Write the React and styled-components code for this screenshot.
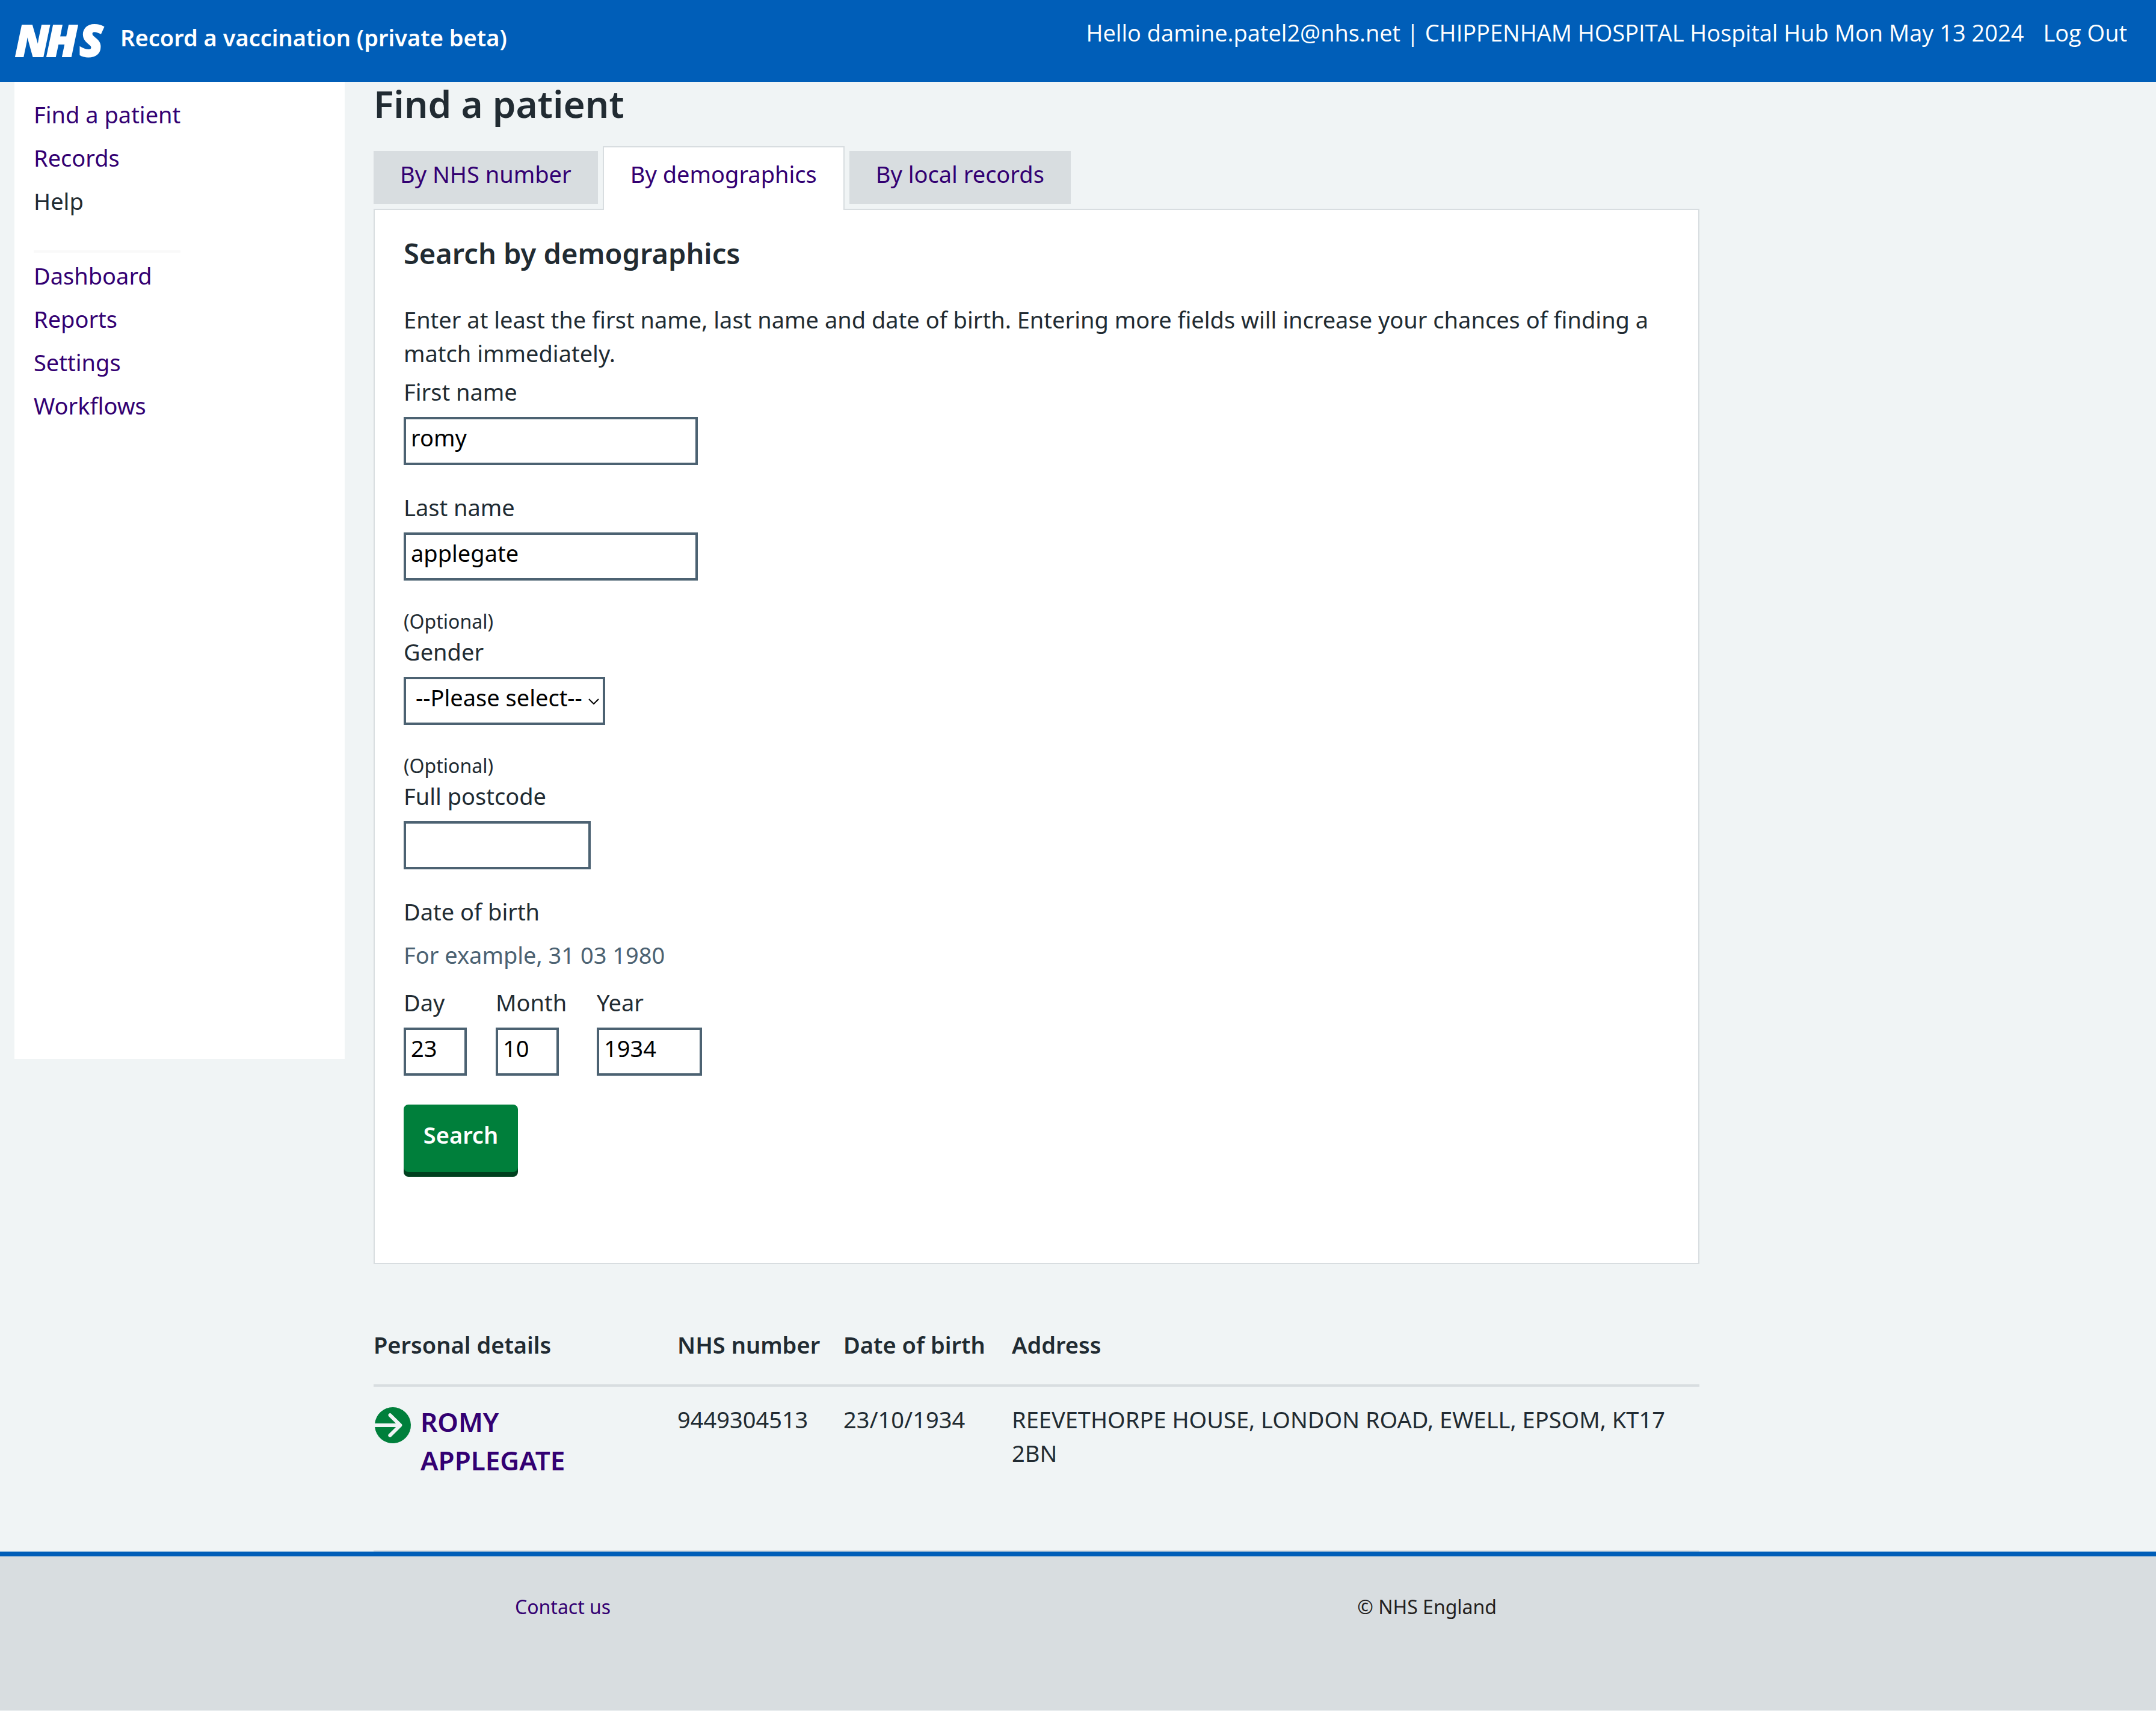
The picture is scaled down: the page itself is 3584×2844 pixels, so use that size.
import React, { useState } from "react";
import styled, { createGlobalStyle, css } from "styled-components";

const color = {
  blue: "#005eb8",
  text: "#212b32",
  visited: "#330072",
  page: "#f0f4f5",
  grey: "#d8dde0",
  secondary: "#4c6272",
  green: "#007f3b",
  greenDark: "#00401e",
  white: "#ffffff",
};

const GlobalStyle = createGlobalStyle`
  *, *::before, *::after { box-sizing: border-box; }
  html { background: ${color.page}; }
  body {
    margin: 0;
    color: ${color.text};
    font-family: "Noto Sans", "Open Sans", sans-serif;
    font-size: 38px;
    line-height: 56px;
  }
  input, select, button { font: inherit; }
`;

const Page = styled.div`
  display: flex;
  flex-direction: column;
`;

const Header = styled.header`
  display: flex;
  align-items: flex-start;
  justify-content: space-between;
  gap: 48px;
  height: 136px;
  padding: 26px 48px 0 24px;
  background: ${color.blue};
  color: ${color.white};
`;

const Brand = styled.a`
  display: flex;
  align-items: flex-start;
  gap: 24px;
  padding-top: 8px;
  color: inherit;
  font-weight: 600;
  text-decoration: none;
`;

const LogoMark = styled.svg`
  display: block;
  overflow: visible;
  width: 152px;
  height: 66px;
  fill: ${color.white};
  stroke: ${color.white};
  stroke-width: 2;
  font-family: "Open Sans", "Noto Sans", sans-serif;
  font-size: 72px;
  font-style: italic;
  font-weight: 800;
`;

const Account = styled.div`
  display: flex;
  gap: 32px;
  font-family: "Open Sans", "Noto Sans", sans-serif;
  white-space: nowrap;
`;

const AccountLink = styled.a`
  color: inherit;
  text-decoration: none;
`;

const Body = styled.div`
  display: flex;
  align-items: flex-start;
  gap: 48px;
  padding: 0 24px;
`;

const Sidebar = styled.nav`
  flex: 0 0 549px;
  min-height: 1624px;
  padding: 26px 32px;
  background: ${color.white};
`;

const NavList = styled.ul`
  display: flex;
  flex-direction: column;
  gap: 16px;
  width: max-content;
  margin: 0;
  padding: 0;
  list-style: none;
`;

const NavLink = styled.a`
  display: block;
  color: ${(p) => (p.$plain ? color.text : color.visited)};
  text-decoration: none;
`;

const NavGroups = styled.div`
  width: max-content;
`;

const Divider = styled.hr`
  height: 4px;
  margin: 54px 0 10px;
  border: 0;
  background: #f9f9f9;
`;

const Main = styled.main`
  flex: 0 1 2204px;
  min-width: 0;
`;

const PageTitle = styled.h1`
  margin: 0 0 35px;
  font-size: 62px;
  font-weight: 600;
  line-height: 72px;
`;

const TabList = styled.div`
  display: flex;
  align-items: flex-end;
  gap: 8px;
`;

const Tab = styled.button`
  margin: 0 0 8px;
  padding: 10px 44px 22px;
  border: 0;
  background: ${color.grey};
  color: ${color.visited};
  ${(p) =>
    p.$active &&
    css`
      position: relative;
      margin-bottom: -2px;
      padding: 16px 44px 32px;
      border: 2px solid ${color.grey};
      border-bottom: 0;
      background: ${color.white};
    `}
`;

const Panel = styled.section`
  padding: 40px 48px 151px;
  border: 2px solid ${color.grey};
  background: ${color.white};
`;

const PanelTitle = styled.h2`
  margin: 0 0 50px;
  font-size: 47px;
  font-weight: 600;
  line-height: 64px;
`;

const Intro = styled.p`
  margin: 0 0 14px;
`;

const Form = styled.form`
  display: flex;
  flex-direction: column;
  align-items: flex-start;
  gap: 48px;
`;

const Field = styled.div`
  display: flex;
  flex-direction: column;
  align-items: flex-start;
`;

const Optional = styled.span`
  display: block;
  margin-bottom: 8px;
  font-size: 32px;
  line-height: 40px;
`;

const Label = styled.label`
  margin-bottom: 20px;
  line-height: 44px;
`;

const controlBox = css`
  display: block;
  height: 80px;
  border: 4px solid ${color.secondary};
  border-radius: 0;
  background: ${color.white};
  color: #000;
  outline: 0;
`;

const Input = styled.input`
  ${controlBox}
  width: ${(p) => p.$width}px;
  padding: 0 8px 12px;
`;

const SelectWrap = styled.div`
  position: relative;
`;

const Select = styled.select`
  ${controlBox}
  width: 335px;
  padding: 0 16px 12px;
  appearance: none;
`;

const Chevron = styled.svg`
  position: absolute;
  top: 36px;
  right: 10px;
  width: 18px;
  height: 10px;
  fill: none;
  stroke: #000;
  stroke-width: 2;
  pointer-events: none;
`;

const Fieldset = styled.fieldset`
  min-width: 0;
  margin: 0;
  padding: 0;
  border: 0;
`;

const Legend = styled.legend`
  margin-bottom: 28px;
  padding: 0;
  line-height: 44px;
`;

const Hint = styled.div`
  margin-bottom: 35px;
  color: ${color.secondary};
  line-height: 44px;
`;

const DateRow = styled.div`
  display: grid;
  grid-template-columns: 105px 120px 175px;
  gap: 48px;
`;

const SearchButton = styled.button`
  width: 190px;
  padding: 22px 0 34px;
  border: 0;
  border-radius: 8px;
  background: ${color.green};
  box-shadow: 0 8px 0 ${color.greenDark};
  color: ${color.white};
  font-weight: 600;
`;

const Results = styled.table`
  width: 100%;
  margin-top: 106px;
  border-collapse: separate;
  border-spacing: 0;
  table-layout: fixed;
`;

const HeadCell = styled.th`
  width: ${(p) => (p.$width ? `${p.$width}px` : "auto")};
  padding: 0 0 38px;
  border-bottom: 4px solid ${color.grey};
  font-weight: 600;
  text-align: left;
  white-space: nowrap;
`;

const Cell = styled.td`
  padding: 26px 48px 118px 0;
  border-bottom: 2px solid ${color.grey};
  vertical-align: top;
`;

const PatientLink = styled.a`
  display: flex;
  align-items: flex-start;
  gap: 10px;
  margin-left: -4px;
  color: ${color.visited};
  font-size: 44px;
  font-weight: 600;
  line-height: 64px;
  text-decoration: none;
`;

const PatientName = styled.span`
  max-width: 280px;
`;

const ArrowIcon = styled.svg`
  flex: none;
  width: 72px;
  height: 72px;
  margin-top: 2px;
  fill: ${color.green};
`;

const Footer = styled.footer`
  display: flex;
  justify-content: space-between;
  min-height: 264px;
  padding: 60px 1096px 0 856px;
  border-top: 8px solid ${color.blue};
  background: ${color.grey};
  color: #231f20;
  font-size: 32px;
  line-height: 48px;
`;

const FooterLink = styled.a`
  color: ${color.visited};
  text-decoration: none;
`;

const primaryLinks = [
  { label: "Find a patient" },
  { label: "Records" },
  { label: "Help", plain: true },
];

const secondaryLinks = [
  { label: "Dashboard" },
  { label: "Reports" },
  { label: "Settings" },
  { label: "Workflows" },
];

const tabs = ["By NHS number", "By demographics", "By local records"];

const dateParts = [
  { id: "day", label: "Day", value: "23", width: 105 },
  { id: "month", label: "Month", value: "10", width: 105 },
  { id: "year", label: "Year", value: "1934", width: 175 },
];

function Nav({ links }) {
  return (
    <NavList>
      {links.map((link) => (
        <li key={link.label}>
          <NavLink href="#" $plain={link.plain}>
            {link.label}
          </NavLink>
        </li>
      ))}
    </NavList>
  );
}

function TextField({ id, label, value = "", width, optional }) {
  return (
    <Field>
      {optional && <Optional>(Optional)</Optional>}
      <Label htmlFor={id}>{label}</Label>
      <Input id={id} name={id} type="text" defaultValue={value} $width={width} />
    </Field>
  );
}

export default function App() {
  const [active, setActive] = useState("By demographics");

  return (
    <Page>
      <GlobalStyle />
      <Header>
        <Brand href="#">
          <LogoMark viewBox="0 0 152 66" role="img" aria-label="NHS">
            <text x="1 53 108" y="60">NHS</text>
          </LogoMark>
          <span>Record a vaccination (private beta)</span>
        </Brand>
        <Account>
          <span>
            Hello damine.patel2@nhs.net | CHIPPENHAM HOSPITAL Hospital Hub Mon May 13 2024
          </span>
          <AccountLink href="#">Log Out</AccountLink>
        </Account>
      </Header>

      <Body>
        <Sidebar>
          <NavGroups>
            <Nav links={primaryLinks} />
            <Divider />
            <Nav links={secondaryLinks} />
          </NavGroups>
        </Sidebar>

        <Main>
          <PageTitle>Find a patient</PageTitle>
          <TabList role="tablist">
            {tabs.map((tab) => (
              <Tab
                key={tab}
                type="button"
                role="tab"
                aria-selected={tab === active}
                $active={tab === active}
                onClick={() => setActive(tab)}
              >
                {tab}
              </Tab>
            ))}
          </TabList>

          <Panel>
            <PanelTitle>Search by demographics</PanelTitle>
            <Intro>
              Enter at least the first name, last name and date of birth. Entering more fields
              will increase your chances of finding a match immediately.
            </Intro>
            <Form onSubmit={(e) => e.preventDefault()}>
              <TextField id="first-name" label="First name" value="romy" width={489} />
              <TextField id="last-name" label="Last name" value="applegate" width={489} />
              <Field>
                <Optional>(Optional)</Optional>
                <Label htmlFor="gender">Gender</Label>
                <SelectWrap>
                  <Select id="gender" name="gender" defaultValue="">
                    <option value="">--Please select--</option>
                    <option value="female">Female</option>
                    <option value="male">Male</option>
                  </Select>
                  <Chevron viewBox="0 0 18 10" aria-hidden="true">
                    <path d="M1 1l8 8 8-8" />
                  </Chevron>
                </SelectWrap>
              </Field>
              <TextField id="postcode" label="Full postcode" width={311} optional />
              <Fieldset>
                <Legend>Date of birth</Legend>
                <Hint>For example, 31 03 1980</Hint>
                <DateRow>
                  {dateParts.map((part) => (
                    <TextField key={part.id} {...part} />
                  ))}
                </DateRow>
              </Fieldset>
              <SearchButton type="submit">Search</SearchButton>
            </Form>
          </Panel>

          <Results>
            <thead>
              <tr>
                <HeadCell scope="col" $width={505}>Personal details</HeadCell>
                <HeadCell scope="col" $width={276}>NHS number</HeadCell>
                <HeadCell scope="col" $width={280}>Date of birth</HeadCell>
                <HeadCell scope="col">Address</HeadCell>
              </tr>
            </thead>
            <tbody>
              <tr>
                <Cell>
                  <PatientLink href="#">
                    <ArrowIcon viewBox="0 0 24 24" aria-hidden="true">
                      <path d="M12 2a10 10 0 0 0-9.95 9h11.64L9.74 7.05a1 1 0 0 1 1.41-1.41l5.66 5.65a1 1 0 0 1 0 1.42l-5.66 5.65a1 1 0 0 1-1.41 0 1 1 0 0 1 0-1.41L13.69 13H2.05A10 10 0 1 0 12 2z" />
                    </ArrowIcon>
                    <PatientName>ROMY APPLEGATE</PatientName>
                  </PatientLink>
                </Cell>
                <Cell>9449304513</Cell>
                <Cell>23/10/1934</Cell>
                <Cell>REEVETHORPE HOUSE, LONDON ROAD, EWELL, EPSOM, KT17 2BN</Cell>
              </tr>
            </tbody>
          </Results>
        </Main>
      </Body>

      <Footer>
        <FooterLink href="#">Contact us</FooterLink>
        <span>© NHS England</span>
      </Footer>
    </Page>
  );
}
